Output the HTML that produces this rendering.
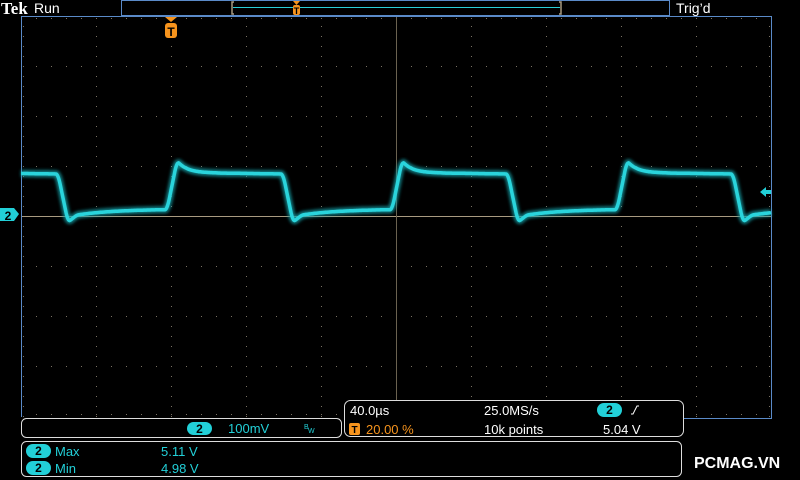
<!DOCTYPE html>
<html><head><meta charset="utf-8"><style>
html,body{margin:0;padding:0;background:#000;width:800px;height:480px;overflow:hidden}
svg{display:block}
text{font-family:"Liberation Sans","DejaVu Sans",sans-serif}
</style></head><body>
<svg id="s" width="800" height="480" viewBox="0 0 800 480">
<defs><filter id="b"><feGaussianBlur stdDeviation="1.6"/></filter></defs>
<rect width="800" height="480" fill="#000"/>
<g id="grid"></g>
<line x1="21" y1="216.5" x2="771" y2="216.5" stroke="#a89a80" stroke-width="1"/>
<line x1="396.5" y1="16" x2="396.5" y2="417" stroke="#6a6250" stroke-width="1"/>
<path d="M21.5 417 V16.5 H771.5 V418.5 H683" fill="none" stroke="#5a8ac8" stroke-width="1"/>
<rect x="121.5" y="0.5" width="548" height="15" fill="none" stroke="#5a8ac8"/>
<line x1="233" y1="7.5" x2="560" y2="7.5" stroke="#2ad0d8" stroke-width="1"/>
<path d="M234 2 h-2 v12 h2 M559 2 h2 v12 h-2" fill="none" stroke="#a89a80" stroke-width="1.5"/>
<path d="M293 1 h7 l-3.5 4z" fill="#f7941d"/>
<rect x="293" y="5" width="7" height="10" rx="2" fill="#f7941d"/>
<text x="296.5" y="14" font-size="9" font-weight="bold" fill="#000" text-anchor="middle">T</text>
<text x="1" y="14" font-size="17" font-weight="bold" fill="#fff" style="font-family:'Liberation Serif',serif">Tek</text>
<text x="34" y="13" font-size="14" fill="#fff">Run</text>
<text x="676" y="13" font-size="14" fill="#fff">Trig’d</text>
<path d="M165 17 h12 l-6 5z" fill="#f7941d"/>
<rect x="165" y="23" width="12" height="15" rx="3" fill="#f7941d"/>
<text x="171" y="36" font-size="12" font-weight="bold" fill="#000" text-anchor="middle">T</text>
<path d="M0 208 h14 l5 6 l-5 7 h-14z" fill="#22d0d8"/>
<text x="8" y="220" font-size="12" font-weight="bold" fill="#000" text-anchor="middle">2</text>
<path d="M760 192 l6 -5 v3 h5 v4 h-5 v3z" fill="#22d0d8"/>
<g id="wave"></g>
<rect x="21.5" y="418.5" width="320" height="19" rx="5" fill="#000" stroke="#ddd"/>
<rect x="187" y="422" width="25" height="13" rx="6.5" fill="#22d0d8"/>
<text x="199.5" y="433" font-size="12" font-weight="bold" fill="#000" text-anchor="middle">2</text>
<text x="228" y="433" font-size="13" fill="#22d0d8">100mV</text>
<text x="304" y="429" font-size="7" fill="#22d0d8">B</text><text x="308" y="433" font-size="7" fill="#22d0d8">W</text>
<rect x="344.5" y="400.5" width="339" height="36" rx="6" fill="#000" stroke="#ddd"/>
<text x="350" y="415" font-size="13" fill="#fff">40.0µs</text>
<rect x="349" y="423" width="11" height="12" rx="2" fill="#f7941d"/>
<text x="354.5" y="433" font-size="10" font-weight="bold" fill="#000" text-anchor="middle">T</text>
<text x="366" y="434" font-size="13" fill="#f7941d">20.00 %</text>
<text x="484" y="415" font-size="13" fill="#fff">25.0MS/s</text>
<text x="484" y="434" font-size="13" fill="#fff">10k points</text>
<rect x="597" y="403" width="25" height="14" rx="7" fill="#22d0d8"/>
<text x="609.5" y="414" font-size="12" font-weight="bold" fill="#000" text-anchor="middle">2</text>
<path d="M631 414 h2 l4 -8 h2" fill="none" stroke="#fff" stroke-width="1"/>
<text x="603" y="434" font-size="13" fill="#fff">5.04 V</text>
<rect x="21.5" y="441.5" width="660" height="35" rx="5" fill="#000" stroke="#ddd"/>
<rect x="26" y="444" width="25" height="14" rx="7" fill="#22d0d8"/>
<text x="38.5" y="455" font-size="12" font-weight="bold" fill="#000" text-anchor="middle">2</text>
<text x="55" y="456" font-size="13" fill="#22d0d8">Max</text>
<text x="161" y="456" font-size="13" fill="#22d0d8">5.11 V</text>
<rect x="26" y="461" width="25" height="14" rx="7" fill="#22d0d8"/>
<text x="38.5" y="472" font-size="12" font-weight="bold" fill="#000" text-anchor="middle">2</text>
<text x="55" y="473" font-size="13" fill="#22d0d8">Min</text>
<text x="161" y="473" font-size="13" fill="#22d0d8">4.98 V</text>
<text x="694" y="468" font-size="16" font-weight="bold" fill="#fff">PCMAG.VN</text>
</svg>
<script>
var g=document.getElementById("grid"),h="";
function dot(x,y){h+='<rect x="'+x+'" y="'+y+'" width="1" height="1" fill="#7a7264"/>';}
for(var k=1;k<10;k++){var x=21+75*k;for(var y=26;y<417;y+=10)dot(x,y);}
for(var j=1;j<8;j++){var y=16+50*j;for(var x=36;x<771;x+=15)dot(x,y);}
for(var x=36;x<771;x+=15){dot(x,18);dot(x,414);}
for(var y=26;y<417;y+=10){dot(23,y);dot(769,y);}
g.innerHTML=h;
function f(x){var t=((x-167)%225+225)%225;
 if(t<10)return 210-49*t/10;
 if(t<50)return 173-12*Math.exp(-(t-10)/10);
 if(t<116)return 173+(t-50)/66;
 if(t<126)return 174+48*(t-116)/10;
 if(t<135)return 222-7*(t-126)/9;
 return 215-6*(1-Math.exp(-(t-135)/40));}
function fs(x){var s=0,n=0;for(var d=-2;d<=2;d+=0.5){s+=f(x+d);n++;}return s/n;}
var d="";for(var x=21;x<=771;x+=0.5)d+=(x==21?"M":"L")+x+" "+fs(x).toFixed(1)+" ";
document.getElementById("wave").innerHTML='<path d="'+d+'" fill="none" stroke="#15a0a8" stroke-width="7" filter="url(#b)" opacity="0.8"/><path d="'+d+'" fill="none" stroke="#2ad4dc" stroke-width="3.5"/>';
</script>
</body></html>
